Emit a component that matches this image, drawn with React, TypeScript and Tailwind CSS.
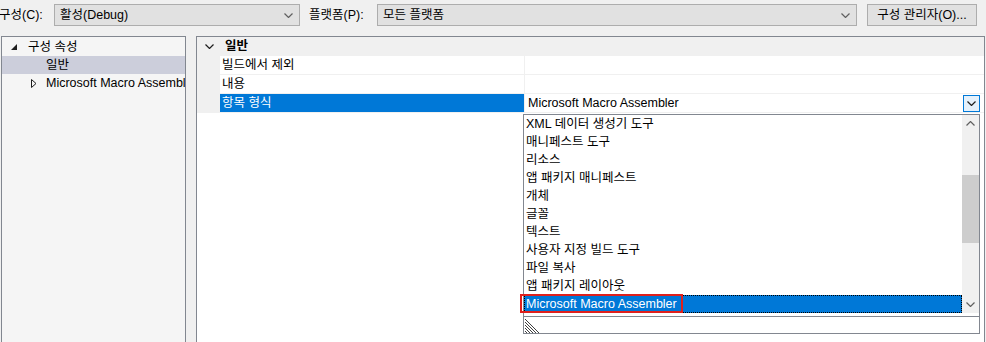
import React from 'react';

const Chevron = ({ up = false, className = '' }: { up?: boolean; className?: string }) => (
  <svg width="9" height="5" viewBox="0 0 9 5" className={className}>
    <polyline
      points={up ? '0.5,4.5 4.5,0.5 8.5,4.5' : '0.5,0.5 4.5,4.5 8.5,0.5'}
      fill="none"
      stroke="currentColor"
      strokeWidth="1.2"
    />
  </svg>
);

const Combo = ({ value, className }: { value: string; className: string }) => (
  <div
    className={`flex h-[22px] items-center justify-between border border-[#adadad] bg-[#e1e1e1] pl-[5px] pr-[6px] ${className}`}
  >
    <span>{value}</span>
    <Chevron className="text-[#606060]" />
  </div>
);

const items = [
  'XML 데이터 생성기 도구',
  '매니페스트 도구',
  '리소스',
  '앱 패키지 매니페스트',
  '개체',
  '글꼴',
  '텍스트',
  '사용자 지정 빌드 도구',
  '파일 복사',
  '앱 패키지 레이아웃',
];

const PropRow = ({ name, selected = false, children }: { name: string; selected?: boolean; children?: React.ReactNode }) => (
  <div className="flex h-[19px]">
    <div className="w-[23px] bg-[#f0f0f0]" />
    <div
      className={`w-[304px] border-b border-[#f0f0f0] pl-[2px] leading-[18px] ${
        selected ? 'bg-[#0078d7] text-white' : 'bg-white'
      }`}
    >
      {name}
    </div>
    <div className="flex flex-1 items-start border-b border-l border-[#f0f0f0] bg-white">{children}</div>
  </div>
);

export default function App() {
  return (
    <div className="relative h-[342px] w-[986px] overflow-hidden bg-[#f0f0f0] font-['Liberation_Sans','Noto_Sans_CJK_KR',sans-serif] text-[12.5px] text-black">
      <div className="flex h-[30px] items-center">
        <span className="w-[55px] -ml-[1px]">구성(C):</span>
        <Combo className="w-[246px]" value="활성(Debug)" />
        <span className="ml-[9px] w-[68px]">플랫폼(P):</span>
        <Combo className="w-[480px]" value="모든 플랫폼" />
        <button className="ml-[10px] h-[22px] w-[110px] border border-[#adadad] bg-[#e1e1e1] text-[12.5px]">
          구성 관리자(O)...
        </button>
      </div>

      <div className="mt-[6px] flex h-[306px] pl-[1px] pr-[1px]">
        <div className="w-[185px] overflow-hidden border border-b-0 border-[#828790] bg-[#f5f5f5] pt-[1px]">
          <div className="flex h-[18px] items-center leading-[18px]">
            <svg width="7" height="7" viewBox="0 0 7 7" className="ml-[9px] mr-[10px]">
              <polygon points="6,0 6,6 0,6" fill="#1e1e1e" />
            </svg>
            <span>구성 속성</span>
          </div>
          <div className="h-[18px] bg-[#cccedb] pl-[44px] leading-[18px]">일반</div>
          <div className="flex h-[18px] items-center overflow-hidden whitespace-nowrap leading-[18px]">
            <svg width="6" height="9" viewBox="0 0 6 9" className="ml-[29px] mr-[9px] shrink-0">
              <polygon points="0.5,0.5 5,4.5 0.5,8.5" fill="none" stroke="#1e1e1e" strokeWidth="1" />
            </svg>
            <span>Microsoft Macro Assembler</span>
          </div>
        </div>

        <div className="ml-[10px] flex-1 border border-b-0 border-[#828790] bg-white">
          <div className="flex h-[19px] items-center bg-[#f0f0f0]">
            <Chevron className="ml-[8px] mr-[11px] text-[#1e1e1e]" />
            <span className="font-bold">일반</span>
          </div>
          <PropRow name="빌드에서 제외" />
          <PropRow name="내용" />
          <PropRow name="항목 형식" selected>
            <span className="flex-1 pl-[3px] leading-[18px]">Microsoft Macro Assembler</span>
            <div className="mr-[4px] mt-[1px] flex h-[17px] w-[17px] items-center justify-center border border-[#0078d7] bg-[#e5f1fb]">
              <Chevron className="text-[#1e1e1e]" />
            </div>
          </PropRow>
        </div>
      </div>

      <div className="absolute left-[523px] top-[114px] w-[457px] border border-[#828790] bg-white">
        <div className="flex h-[198px]">
          <div className="flex-1">
            {items.map((t) => (
              <div key={t} className="h-[18px] pl-[2px] leading-[18px]">
                {t}
              </div>
            ))}
            <div className="h-[18px] border border-dotted border-black bg-[#0078d7] pl-[1px] leading-[16px] text-white">
              Microsoft Macro Assembler
            </div>
          </div>
          <div className="flex w-[17px] flex-col bg-[#f0f0f0]">
            <div className="flex h-[17px] items-center justify-center">
              <Chevron up className="text-[#606060]" />
            </div>
            <div className="h-[43px]" />
            <div className="h-[68px] bg-[#cdcdcd]" />
            <div className="flex-1" />
            <div className="flex h-[17px] items-center justify-center">
              <Chevron className="text-[#606060]" />
            </div>
          </div>
        </div>
        <div className="h-[3px]" />
        <div className="h-[17px] border-t border-[#828790]">
          <svg width="17" height="16" viewBox="0 0 17 16" className="ml-[1px]">
            <g stroke="#404040" strokeWidth="1">
              <line x1="0" y1="2" x2="14" y2="16" />
              <line x1="0" y1="5" x2="11" y2="16" />
              <line x1="0" y1="8" x2="8" y2="16" />
              <line x1="0" y1="11" x2="5" y2="16" />
              <line x1="0" y1="14" x2="2" y2="16" />
            </g>
          </svg>
        </div>
      </div>

      <div className="absolute left-[520px] top-[294px] h-[19px] w-[163px] border-2 border-[#e0201c]" />
    </div>
  );
}
